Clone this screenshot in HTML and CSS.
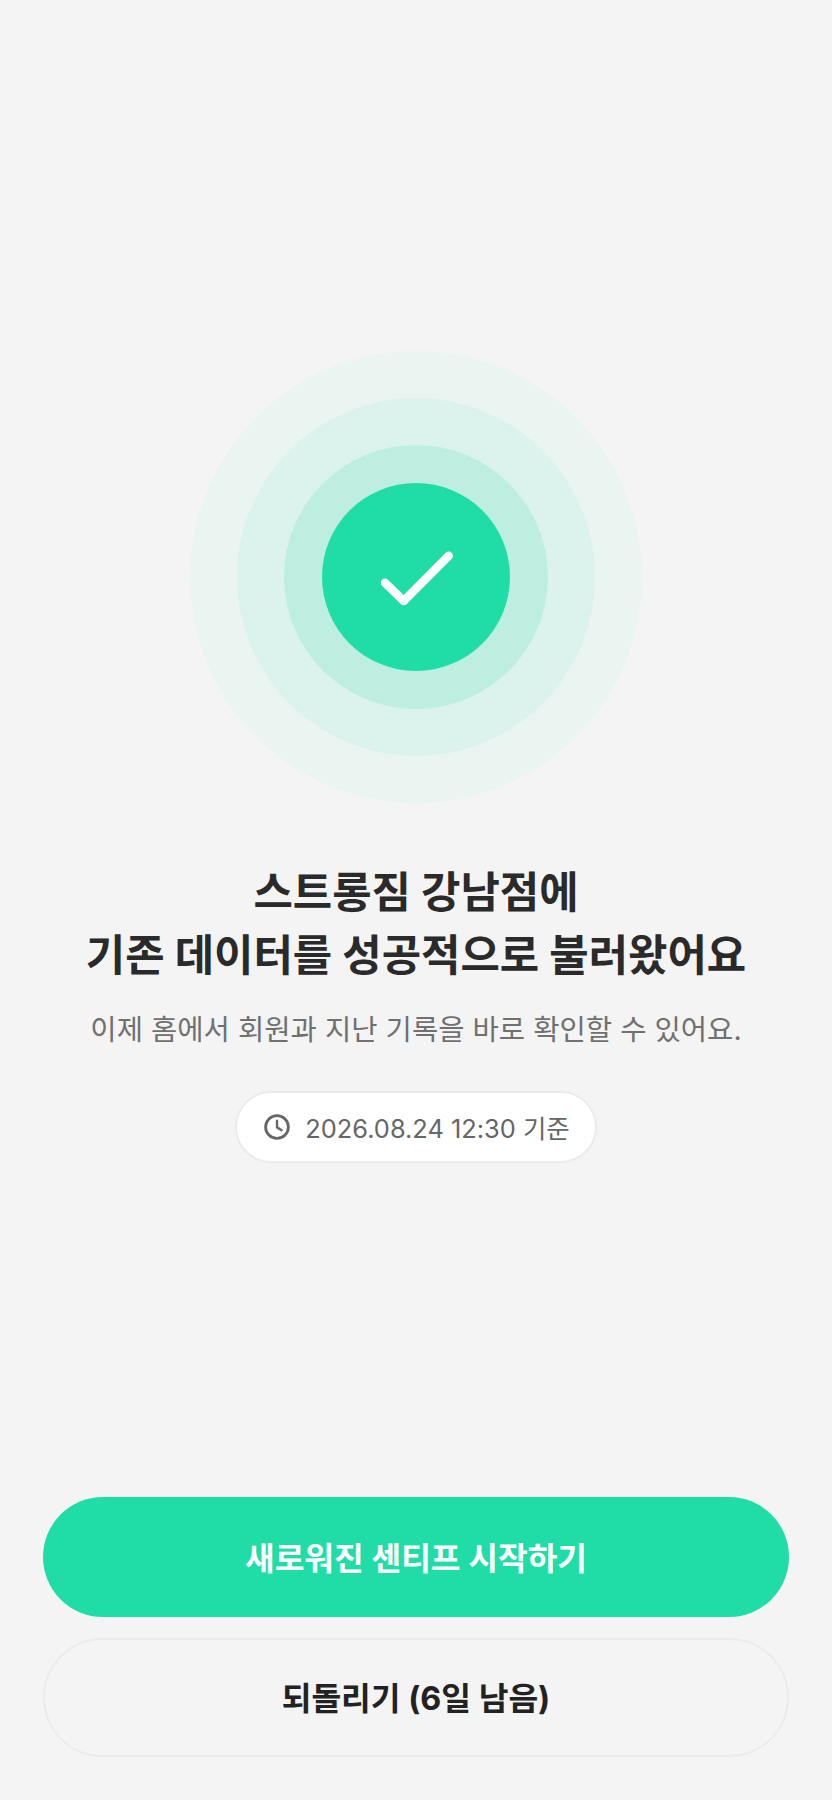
FILE: index.html
```html
<!DOCTYPE html>
<html lang="ko">
<head>
    <meta charset="UTF-8">
    <meta name="viewport" content="width=device-width, initial-scale=1.0">
    <title>데이터 불러오기 완료</title>
    <link rel="stylesheet" href="styles.css">
</head>
<body>
    <div class="page">
        <main class="result">
            <div class="ring ring-outer">
                <div class="ring ring-middle">
                    <div class="ring ring-inner">
                        <div class="ring ring-core">
                            <svg class="check" viewBox="0 0 80 64" width="80" height="64" aria-hidden="true">
                                <path d="M9 37.7 27.7 56 72.7 10.7" fill="none" stroke="#fff" stroke-width="8.5" stroke-linecap="round" stroke-linejoin="round"/>
                            </svg>
                        </div>
                    </div>
                </div>
            </div>
            <h1 class="title">스트롱짐 강남점에<br>기존 데이터를 성공적으로 불러왔어요</h1>
            <p class="desc">이제 홈에서 회원과 지난 기록을 바로 확인할 수 있어요.</p>
            <div class="chip">
                <svg class="clock" viewBox="0 0 26 26" width="26" height="26" aria-hidden="true">
                    <circle cx="13" cy="13" r="11.4" fill="none" stroke="#666" stroke-width="2.8"/>
                    <path d="M13 6.8V13.4L17.6 16.2" fill="none" stroke="#666" stroke-width="2.4" stroke-linecap="round" stroke-linejoin="round"/>
                </svg>
                <span>2026.08.24 12:30 기준</span>
            </div>
        </main>
        <div class="actions">
            <button class="button button-primary">새로워진 센티프 시작하기</button>
            <button class="button button-outline">되돌리기 (6일 남음)</button>
        </div>
    </div>
</body>
</html>
```

FILE: styles.css
```css
* {
    box-sizing: border-box;
}
body {
    margin: 0;
    background-color: #f4f4f4;
    font-family: Inter, "Noto Sans CJK KR", sans-serif;
}
.page {
    display: flex;
    flex-direction: column;
    height: 1800px;
    padding: 351px 43px 43px;
}
.result {
    flex: 1;
    display: flex;
    flex-direction: column;
    align-items: center;
}
.ring {
    display: flex;
    justify-content: center;
    align-items: center;
    flex-shrink: 0;
    border-radius: 50%;
}
.ring-outer {
    width: 452px;
    height: 452px;
    background-color: #eaf4f1;
}
.ring-middle {
    width: 358px;
    height: 358px;
    background-color: #dbf3ec;
}
.ring-inner {
    width: 264px;
    height: 264px;
    background-color: #bdeee0;
}
.ring-core {
    width: 188px;
    height: 188px;
    background-color: #20dda8;
}
.title {
    margin: 58px 0 0;
    font-size: 42.8px;
    font-weight: 700;
    line-height: 63px;
    text-align: center;
    color: #2a2a2a;
}
.desc {
    margin: 23px 0 0;
    font-size: 28.6px;
    line-height: 40px;
    text-align: center;
    color: #707070;
}
.chip {
    display: flex;
    align-items: center;
    gap: 15px;
    height: 72px;
    margin-top: 41px;
    padding: 0 25px 0 27px;
    background-color: #fff;
    border: 2px solid #ebebeb;
    border-radius: 36px;
    font-size: 25.4px;
    color: #666;
}
.actions {
    display: flex;
    flex-direction: column;
    gap: 21px;
}
.button {
    height: 120px;
    padding: 0 0 2px;
    border-radius: 60px;
    font-family: inherit;
    font-size: 32.3px;
    font-weight: 700;
}
.button-primary {
    color: #fff;
    background-color: #20dda8;
    border: none;
}
.button-outline {
    height: 119px;
    padding-bottom: 3px;
    color: #222;
    background-color: transparent;
    border: 2px solid #ebebeb;
}
```
